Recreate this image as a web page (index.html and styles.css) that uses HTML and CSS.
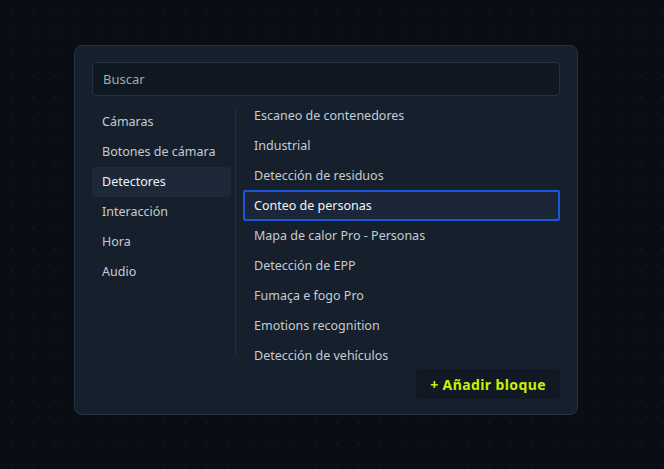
FILE: index.html
```html
<!DOCTYPE html>
<html lang="es">
<head>
    <meta charset="UTF-8">
    <meta name="viewport" content="width=device-width, initial-scale=1.0">
    <title>Añadir bloque</title>
    <link rel="stylesheet" href="styles.css">
</head>
<body>
    <div class="dialog">
        <input class="search" type="text" placeholder="Buscar" />
        <div class="picker">
            <ul class="groups">
                <li>Cámaras</li>
                <li>Botones de cámara</li>
                <li class="active">Detectores</li>
                <li>Interacción</li>
                <li>Hora</li>
                <li>Audio</li>
            </ul>
            <ul class="blocks">
                <li>Escaneo de contenedores</li>
                <li>Industrial</li>
                <li>Detección de residuos</li>
                <li class="selected">Conteo de personas</li>
                <li>Mapa de calor Pro - Personas</li>
                <li>Detección de EPP</li>
                <li>Fumaça e fogo Pro</li>
                <li>Emotions recognition</li>
                <li>Detección de vehículos</li>
            </ul>
        </div>
        <div class="actions">
            <button class="add">+ Añadir bloque</button>
        </div>
    </div>
</body>
</html>
```

FILE: styles.css
```css
body {
    margin: 0;
    height: 469px;
    overflow: hidden;
    font-family: "Noto Sans", sans-serif;
    background-color: #0a0e14;
    background-image: radial-gradient(circle, #12171f 1px, transparent 1.5px);
    background-size: 21.7px 21.7px;
    background-position: 1px 0;
}
.dialog {
    width: 468px;
    margin: 45px 0 0 74px;
    padding: 16px 17px 15px;
    background: #15202c;
    border: 1px solid #253240;
    border-radius: 8px;
}
.search {
    display: block;
    box-sizing: border-box;
    width: 100%;
    height: 34px;
    padding: 0 10px;
    font: 13px "Noto Sans", sans-serif;
    color: #d0d4da;
    background: #0f1720;
    border: 1px solid #243241;
    border-radius: 4px;
    outline: none;
}
.search::placeholder {
    color: #a2a9b2;
}
ul {
    list-style: none;
    margin: 0;
    padding: 0;
}
.picker {
    display: flex;
    gap: 7px;
    margin-top: 3px;
    height: 262px;
}
.groups {
    width: 139px;
    margin-top: 8px;
    margin-bottom: 4px;
    padding-right: 4px;
    border-right: 1px solid #222e3c;
}
.groups li,
.blocks li {
    box-sizing: border-box;
    height: 30px;
    line-height: 30px;
    font-size: 12.5px;
    color: #c6cbd2;
    white-space: nowrap;
}
.groups li {
    padding-left: 10px;
    border-radius: 4px;
}
.groups li.active {
    background: #1d2939;
    color: #eef1f5;
}
.blocks {
    flex: 1;
    padding-top: 1px;
    overflow: hidden;
}
.blocks li {
    padding-left: 9px;
    border: 2px solid transparent;
    line-height: 27px;
}
.blocks li.selected {
    height: 31px;
    margin-bottom: -1px;
    background: #1b2738;
    border-color: #1a56d6;
    border-radius: 2px;
    color: #f2f4f7;
}
.actions {
    display: flex;
    justify-content: flex-end;
    margin-top: 8px;
}
.add {
    height: 30px;
    padding: 0 14px;
    font: bold 14px "Noto Sans", sans-serif;
    letter-spacing: 0.4px;
    color: #c9f200;
    background: #111a24;
    border: none;
    border-radius: 4px;
    cursor: pointer;
}
```
